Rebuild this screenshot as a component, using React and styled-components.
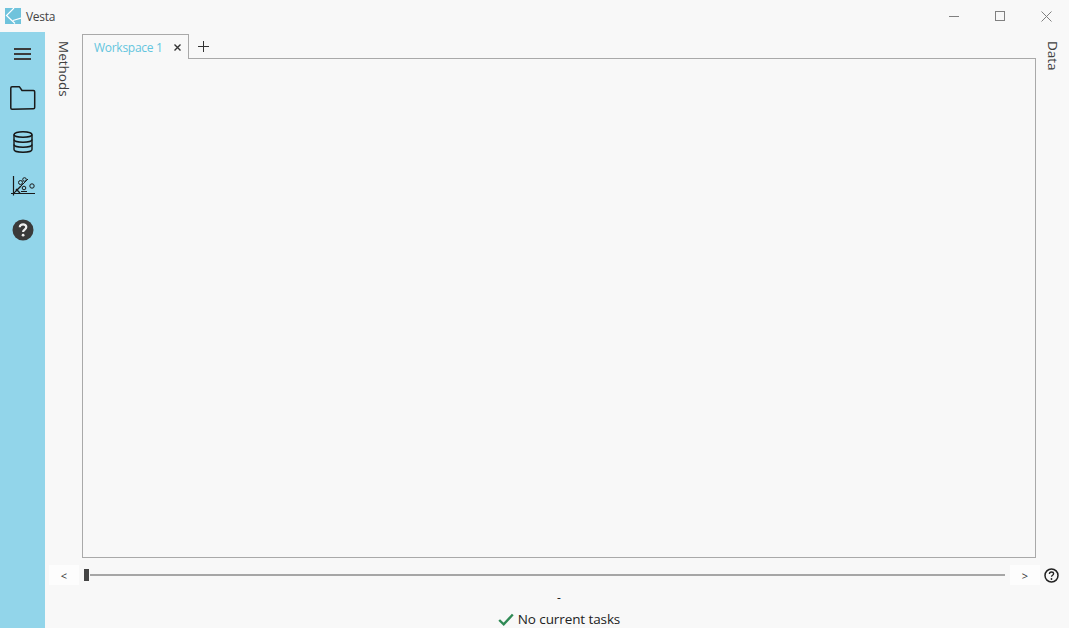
import React from 'react';
import styled, { createGlobalStyle } from 'styled-components';

const Global = createGlobalStyle`
  html, body { margin: 0; padding: 0; background: #f8f8f8; overflow: hidden; }
  * { box-sizing: border-box; }
`;

const Shell = styled.div`
  width: 1069px; height: 628px; display: flex; flex-direction: column;
  background: #f8f8f8; font-family: "Open Sans", "Noto Sans", sans-serif; color: #3c3c3c; overflow: hidden;
`;
const TitleBar = styled.header`
  height: 32px; flex: none; display: flex; align-items: center; padding-left: 5px;
`;
const AppName = styled.span`
  font-size: 12px; margin-left: 5px; color: #444; letter-spacing: -0.3px;
`;
const WindowControls = styled.div`
  margin-left: auto; display: flex; height: 32px;
`;
const WindowButton = styled.button`
  width: 46px; height: 32px; border: 0; background: none; padding: 0; display: flex;
  align-items: center; justify-content: center; color: #808080;
`;
const Body = styled.div`flex: 1; display: flex; min-height: 0;`;
const Sidebar = styled.nav`
  width: 45px; flex: none; background: #92d5ea; display: flex; flex-direction: column; align-items: center;
`;
const SideButton = styled.button`
  width: 44px; height: 44px; border: 0; background: none; padding: 0; display: flex;
  align-items: center; justify-content: center; color: #1d1d1d;
`;
const Main = styled.main`flex: 1; display: flex; flex-direction: column; min-width: 0;`;
const Upper = styled.div`height: 526px; flex: none; display: flex;`;
const Rail = styled.div`
  flex: none; width: ${p => p.$w}px; display: flex; justify-content: ${p => p.$end ? 'flex-end' : 'flex-start'};
  padding: 9px ${p => p.$end ? 7 : 0}px 0 ${p => p.$end ? 0 : 10}px;
`;
const RailLabel = styled.span`
  writing-mode: vertical-rl; font-size: 13.5px; line-height: 18px; height: max-content; color: #404040;
`;
const Workspace = styled.section`flex: 1; display: flex; flex-direction: column; min-width: 0;`;
const TabStrip = styled.div`height: 26px; padding-top: 2px; flex: none; display: flex; align-items: stretch;`;
const Tab = styled.div`
  width: 107px; height: 25px; display: flex; align-items: center; padding: 1px 0 0 11px; z-index: 1;
  border: 1px solid #a9a9a9; border-bottom: 0; background: #f8f8f8;
`;
const TabTitle = styled.span`font-size: 12px; color: #63c5de; letter-spacing: -0.28px;`;
const TabClose = styled.span`margin-left: 11px; display: flex; color: #333;`;
const AddTab = styled.button`
  width: 28px; height: 24px; border: 0; background: none; padding: 0; display: flex; align-items: center;
  justify-content: center; color: #333;
`;
const Pane = styled.div`flex: 1; border: 1px solid #a9a9a9; background: #f8f8f8;`;
const SliderRow = styled.div`
  height: 20px; margin-top: 7px; flex: none; display: flex; align-items: center; padding-left: 4px;
`;
const StepButton = styled.button`
  width: 30px; height: 20px; border: 0; background: #fdfdfd; padding: 0; font-size: 11px; color: #333;
  font-family: inherit; display: flex; align-items: center; justify-content: center;
`;
const Track = styled.div`
  width: 921px; height: 20px; display: flex; align-items: center; margin: 0 5px;
`;
const Thumb = styled.div`width: 5px; height: 12px; background: #444; flex: none;`;
const Line = styled.div`height: 2px; flex: 1; margin-left: 1px; background: #a6a6a6;`;
const HelpMini = styled.span`display: flex; margin-left: 4px; color: #222;`;
const Status = styled.footer`
  flex: 1; display: flex; flex-direction: column; align-items: center; font-size: 13.5px; color: #222;
  padding-left: 4px;
`;
const Dash = styled.div`height: 20px; margin-top: 3px; font-size: 12px; line-height: 20px;`;
const Task = styled.div`display: flex; align-items: center; gap: 4px; line-height: 20px; margin-top: 1px; letter-spacing: -0.1px;`;

const Logo = () => (
  <svg width="16" height="16" viewBox="0 0 16 16">
    <rect width="16" height="16" fill="#6fc3dc" />
    <path d="M9 0 1.500 7.500 10 15.500M8 12.500 16 10" stroke="#fff" strokeWidth="1.200" fill="none" />
  </svg>
);

export default function App() {
  return (
    <Shell>
      <Global />
      <TitleBar>
        <Logo />
        <AppName>Vesta</AppName>
        <WindowControls>
          <WindowButton><svg width="10" height="10"><path d="M0 5.500h10" stroke="currentColor" /></svg></WindowButton>
          <WindowButton><svg width="10" height="10"><rect x=".5" y=".5" width="9" height="9" fill="none" stroke="currentColor" /></svg></WindowButton>
          <WindowButton><svg width="11" height="11"><path d="M.5.500l10 10M10.500.500l-10 10" stroke="currentColor" /></svg></WindowButton>
        </WindowControls>
      </TitleBar>
      <Body>
        <Sidebar>
          <SideButton>
            <svg width="17" height="14" viewBox="0 0 17 14"><path d="M0 2h17M0 7h17M0 12h17" stroke="#3c3c3c" strokeWidth="2" /></svg>
          </SideButton>
          <SideButton>
            <svg width="26" height="26" viewBox="0 0 26 26"><path d="M2 24.200c-.7 0-1.200-.5-1.200-1.200V3c0-.7.5-1.200 1.200-1.200h7.500l2.500 3.700h11.500c.7 0 1.200.5 1.200 1.200v15.800c0 .7-.5 1.200-1.200 1.200z" fill="none" stroke="#1a1a1a" strokeWidth="1.500" strokeLinejoin="round" /></svg>
          </SideButton>
          <SideButton>
            <svg width="20" height="22" viewBox="0 0 20 22" fill="none" stroke="#151515" strokeWidth="1.400">
              <ellipse cx="10" cy="3.500" rx="9" ry="2.800" />
              <path d="M1 3.500v15c0 1.600 4 2.800 9 2.800s9-1.200 9-2.800v-15" />
              <path d="M1 8.500c0 1.600 4 2.800 9 2.800s9-1.200 9-2.800M1 13.500c0 1.600 4 2.800 9 2.800s9-1.200 9-2.800" />
              <path d="M16 8.800v.01M16 13.800v.01M16 18.800v.01" strokeWidth="2.200" />
            </svg>
          </SideButton>
          <SideButton>
            <svg width="24" height="20" viewBox="0 0 24 20" fill="none" stroke="#1a1a1a" strokeWidth="1">
              <path d="M2.500 0v19.500M0 17.500h24" strokeWidth="1.200" />
              <path d="M3 17 17 3" />
              <path d="M4 16l6-6M5 13l4 4" strokeWidth="1.400" />
              <circle cx="9.500" cy="6.500" r="2" /><circle cx="13.500" cy="3.500" r="1.800" /><circle cx="21" cy="10" r="2.200" />
              <circle cx="13" cy="12" r="1.800" /><path d="M10 15.500h6" />
            </svg>
          </SideButton>
          <SideButton>
            <svg width="22" height="22" viewBox="0 0 22 22">
              <circle cx="11" cy="11" r="10.500" fill="#3a3a3a" />
              <path d="M7.800 8.300c0-1.900 1.400-3 3.300-3s3.200 1.100 3.200 2.800c0 2.600-3.200 2.500-3.200 5" fill="none" stroke="#f0f0f0" strokeWidth="2.200" />
              <circle cx="11.100" cy="16.200" r="1.400" fill="#f0f0f0" />
            </svg>
          </SideButton>
        </Sidebar>
        <Main>
          <Upper>
            <Rail $w={37}><RailLabel>Methods</RailLabel></Rail>
            <Workspace>
              <TabStrip>
                <Tab>
                  <TabTitle>Workspace 1</TabTitle>
                  <TabClose><svg width="7" height="7"><path d="M.5.500l6 6M6.500.500l-6 6" stroke="currentColor" strokeWidth="1.400" /></svg></TabClose>
                </Tab>
                <AddTab><svg width="11" height="11"><path d="M5.500 0v11M0 5.500h11" stroke="currentColor" /></svg></AddTab>
              </TabStrip>
              <Pane />
            </Workspace>
            <Rail $w={33} $end><RailLabel>Data</RailLabel></Rail>
          </Upper>
          <SliderRow>
            <StepButton>&lt;</StepButton>
            <Track>
              <Thumb />
              <Line />
            </Track>
            <StepButton>&gt;</StepButton>
            <HelpMini>
              <svg width="15" height="15" viewBox="0 0 15 15">
                <circle cx="7.500" cy="7.500" r="6.500" fill="none" stroke="currentColor" strokeWidth="1.500" />
                <path d="M5.400 5.900c0-1.200.9-1.900 2.100-1.900s2.100.7 2.100 1.800c0 1.500-2.100 1.500-2.100 3" fill="none" stroke="currentColor" strokeWidth="1.300" />
                <circle cx="7.500" cy="11" r=".9" fill="currentColor" />
              </svg>
            </HelpMini>
          </SliderRow>
          <Status>
            <Dash>-</Dash>
            <Task>
              <svg width="16" height="13" viewBox="0 0 16 13"><path d="M1.200 7l4.500 4.300L14.800 1.500" fill="none" stroke="#2f8a55" strokeWidth="2.400" /></svg>
              No current tasks
            </Task>
          </Status>
        </Main>
      </Body>
    </Shell>
  );
}
